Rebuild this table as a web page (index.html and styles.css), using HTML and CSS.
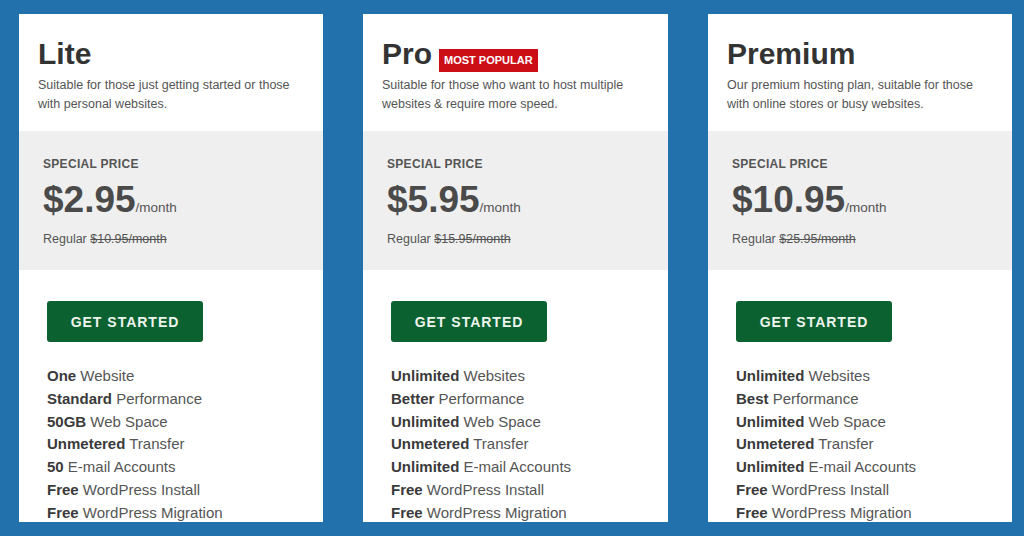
FILE: index.html
```html
<!DOCTYPE html>
<html lang="en">
<head>
<meta charset="utf-8">
<title>Hosting Plans</title>
<link rel="stylesheet" href="styles.css">
</head>
<body>
<main class="plans">
  <section class="card">
    <header class="head">
      <h2 class="title">Lite</h2>
      <p class="desc">Suitable for those just getting started or those with personal websites.</p>
    </header>
    <div class="price-box">
      <div class="label">SPECIAL PRICE</div>
      <div class="price"><span class="amount">$2.95</span><span class="per">/month</span></div>
      <div class="regular">Regular <s>$10.95/month</s></div>
    </div>
    <div class="body">
      <a class="btn" href="#">GET STARTED</a>
      <ul class="features">
        <li><b>One</b> Website</li>
        <li><b>Standard</b> Performance</li>
        <li><b>50GB</b> Web Space</li>
        <li><b>Unmetered</b> Transfer</li>
        <li><b>50</b> E-mail Accounts</li>
        <li><b>Free</b> WordPress Install</li>
        <li><b>Free</b> WordPress Migration</li>
      </ul>
    </div>
  </section>
  <section class="card">
    <header class="head">
      <h2 class="title">Pro <span class="badge">MOST POPULAR</span></h2>
      <p class="desc">Suitable for those who want to host multiple websites &amp; require more speed.</p>
    </header>
    <div class="price-box">
      <div class="label">SPECIAL PRICE</div>
      <div class="price"><span class="amount">$5.95</span><span class="per">/month</span></div>
      <div class="regular">Regular <s>$15.95/month</s></div>
    </div>
    <div class="body">
      <a class="btn" href="#">GET STARTED</a>
      <ul class="features">
        <li><b>Unlimited</b> Websites</li>
        <li><b>Better</b> Performance</li>
        <li><b>Unlimited</b> Web Space</li>
        <li><b>Unmetered</b> Transfer</li>
        <li><b>Unlimited</b> E-mail Accounts</li>
        <li><b>Free</b> WordPress Install</li>
        <li><b>Free</b> WordPress Migration</li>
      </ul>
    </div>
  </section>
  <section class="card">
    <header class="head">
      <h2 class="title">Premium</h2>
      <p class="desc">Our premium hosting plan, suitable for those with online stores or busy websites.</p>
    </header>
    <div class="price-box">
      <div class="label">SPECIAL PRICE</div>
      <div class="price"><span class="amount">$10.95</span><span class="per">/month</span></div>
      <div class="regular">Regular <s>$25.95/month</s></div>
    </div>
    <div class="body">
      <a class="btn" href="#">GET STARTED</a>
      <ul class="features">
        <li><b>Unlimited</b> Websites</li>
        <li><b>Best</b> Performance</li>
        <li><b>Unlimited</b> Web Space</li>
        <li><b>Unmetered</b> Transfer</li>
        <li><b>Unlimited</b> E-mail Accounts</li>
        <li><b>Free</b> WordPress Install</li>
        <li><b>Free</b> WordPress Migration</li>
      </ul>
    </div>
  </section>
</main>
</body>
</html>
```

FILE: styles.css
```css
html, body {
  margin: 0;
  padding: 0;
}
body {
  background: #2371ac;
  font-family: "Liberation Sans", Arial, sans-serif;
  width: 1024px;
  height: 536px;
  overflow: hidden;
}
.plans {
  display: flex;
  gap: 40px;
  padding: 14px 12px 0 19px;
}
.card {
  width: 304px;
  height: 508px;
  background: #ffffff;
  overflow: hidden;
  display: flex;
  flex-direction: column;
}
.card > * {
  flex-shrink: 0;
}
.card:nth-child(2) {
  width: 305px;
}
.head {
  padding: 22px 19px 17px 19px;
}
.title {
  margin: 0;
  font-size: 30px;
  line-height: 36px;
  font-weight: bold;
  color: #333333;
  display: flex;
  align-items: center;
}
.badge {
  display: inline-block;
  margin-left: 7px;
  margin-top: 13px;
  background: #cc0e17;
  color: #ffffff;
  font-size: 11px;
  line-height: 23px;
  padding: 0 5px;
  font-weight: bold;
  letter-spacing: 0;
}
.desc {
  margin: 4px 0 0 0;
  font-size: 12.5px;
  line-height: 19px;
  color: #555555;
}
.price-box {
  background: #efefef;
  height: 139px;
  box-sizing: border-box;
  padding: 25px 24px 0 24px;
}
.label {
  font-size: 12px;
  font-weight: bold;
  letter-spacing: 0.3px;
  color: #555555;
  line-height: 16px;
}
.price {
  margin-top: 7px;
  line-height: 42px;
  color: #4a4a4a;
}
.amount {
  font-size: 37px;
  font-weight: bold;
}
.per {
  font-size: 13.5px;
  color: #555555;
}
.regular {
  margin-top: 1px;
  font-size: 12.5px;
  line-height: 18px;
  color: #555555;
}
.regular s {
  color: #555555;
}
.body {
  padding: 31px 28px 0 28px;
}
.btn {
  display: flex;
  align-items: center;
  justify-content: center;
  width: 156px;
  height: 41px;
  background: #0c6130;
  border-radius: 3px;
  color: #eef4ee;
  font-size: 14px;
  font-weight: bold;
  letter-spacing: 1px;
  text-decoration: none;
}
.features {
  list-style: none;
  margin: 23px 0 0 0;
  padding: 0;
  font-size: 15px;
  line-height: 22.8px;
  color: #555555;
}
.features b {
  color: #3a3a3a;
}
```
